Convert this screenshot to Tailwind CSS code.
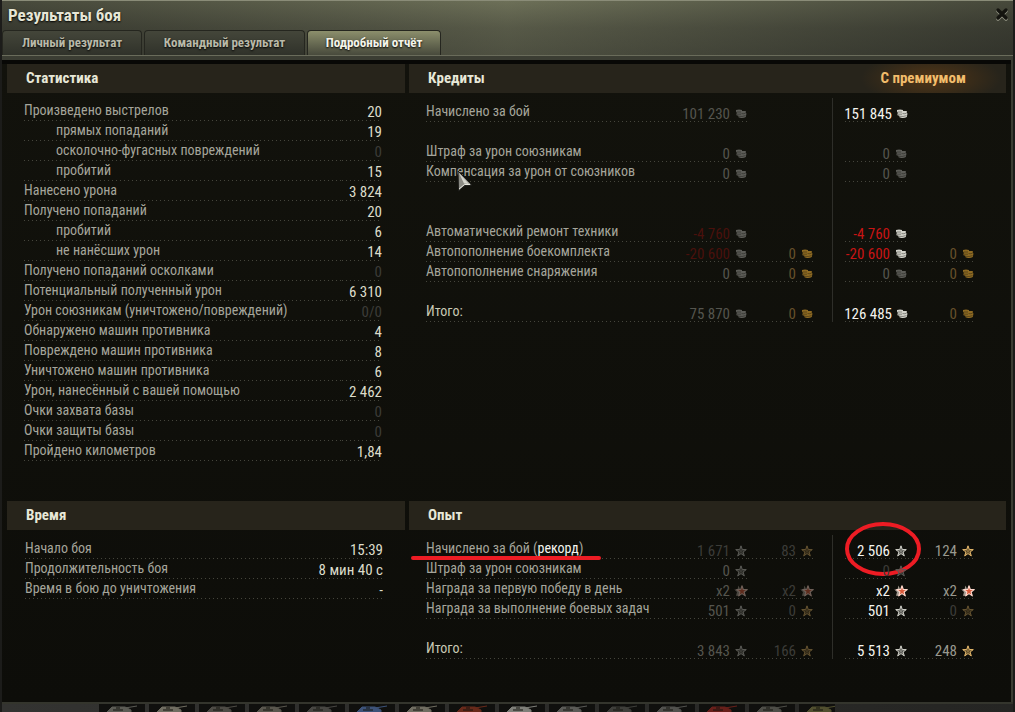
<!DOCTYPE html>
<html lang="ru">
<head>
    <meta charset="UTF-8">
    <meta name="viewport" content="width=device-width, initial-scale=1.0">
    <title>Результаты боя</title>
    <script src="https://cdn.jsdelivr.net/npm/@tailwindcss/browser@4"></script>
</head>
<body class="bg-[#1c1c1a] font-['Roboto_Condensed','Liberation_Sans_Narrow','Liberation_Sans',sans-serif]">
    <!-- Shared icons -->
    <svg class="hidden" xmlns="http://www.w3.org/2000/svg">
        <symbol id="coins" viewBox="0 0 12 10">
            <path fill="currentColor" d="M1 1L4 .5 7 1V2L10.800 2V4L11.500 4.500 10.800 8Q8.500 9.400 5 8.800L3.500 8.200V6.800L1.500 6.200V4.600L2.200 4 1 3Z"/>
            <path d="M1.500 3H6M2 5.200H6M4 7.300Q7 8 10.600 6.600M6.500 4.600Q9 5 10.600 4.200" stroke="#11110c" stroke-opacity=".5" stroke-width=".8" fill="none"/>
        </symbol>
        <symbol id="star" viewBox="0 0 12 12">
            <path fill="currentColor" fill-opacity=".35" stroke="currentColor" stroke-width="1" stroke-linejoin="round" d="M6 .8L7.300 4.500 11.300 4.600 8.100 7 9.300 10.900 6 8.600 2.700 10.900 3.900 7 .7 4.600 4.700 4.500Z"/>
            <path stroke="currentColor" stroke-width=".5" stroke-opacity=".6" d="M6 6V1M6 6L11 4.600M6 6L9.200 10.700M6 6L2.800 10.700M6 6L1 4.600"/>
        </symbol>
        <symbol id="bonus" viewBox="0 0 14 12">
            <path fill="#a39a90" d="M4.500 .5L6 4 6 11 2 10.800 3 7 .3 4.500 3.500 4.200Z"/>
            <path fill="#d95a3a" stroke="#ffd9cc" stroke-width="1.100" stroke-linejoin="round" d="M8 .8L9.300 4.500 13.300 4.600 10.100 7 11.300 10.900 8 8.600 4.700 10.900 5.900 7 2.700 4.600 6.700 4.500Z"/>
        </symbol>
    </svg>

    <main class="flex min-h-screen flex-col px-[2px]">
        <div class="flex flex-1 flex-col border-b-2 border-[#34352d] bg-[#3b3d33]">
            <header class="border-t border-[#8a8c78] bg-linear-to-b from-[#656853] via-[#4a4c3f] to-[#3f4137]">
                <div class="bg-linear-to-r from-[#22231d]/45 via-[#8b8e6a]/20 to-[#22231d]/45">
                    <div class="flex h-[29px] items-center justify-between pl-[6px] pr-1">
                        <h1 class="text-[17px] font-bold text-[#e6e6d6] [text-shadow:0_1px_2px_#000]">Результаты боя</h1>
                        <button aria-label="Закрыть" class="pb-1">
                            <svg class="h-[14px] w-[14px]" viewBox="0 0 14 14"><path d="M3 4L11 12M11 4L3 12" stroke="#9b9c8c" stroke-width="3.500" stroke-linecap="round"/><path d="M3 3L11 11M11 3L3 11" stroke="#14140f" stroke-width="3.500" stroke-linecap="round"/></svg>
                        </button>
                    </div>
                    <nav class="flex h-[25px] gap-[2px] text-[13px] font-bold">
                        <button class="w-[140px] rounded-t-sm border border-b-0 border-[#25261f] bg-linear-to-b from-[#44463a] to-[#30322a] text-[#b9b9a8] [text-shadow:0_1px_2px_#000]">Личный результат</button>
                        <button class="w-[161px] rounded-t-sm border border-b-0 border-[#25261f] bg-linear-to-b from-[#44463a] to-[#30322a] text-[#b9b9a8] [text-shadow:0_1px_2px_#000]">Командный результат</button>
                        <button class="w-[134px] rounded-t-sm border border-b-0 border-[#25261f] bg-linear-to-b from-[#8c8f6c] to-[#484a3c] text-[#f4f4ea] [text-shadow:0_1px_2px_#000]">Подробный отчёт</button>
                    </nav>
                </div>
            </header>
            <div class="h-[5px] border-t border-[#6a6c5b] bg-[#3b3d33]"></div>

            <div class="mr-[2px] grid flex-1 grid-cols-[2fr_3fr] grid-rows-[auto_1fr] gap-x-1 border-t-4 border-[#080806] bg-linear-to-b from-[#12120c] to-[#0d0d09] px-[5px]">
                <section class="min-h-[437px]">
                    <h2 class="bg-[#27241b] px-[19px] text-[15px] leading-[29px] font-bold text-[#e8e8d8]">Статистика</h2>
                    <div class="mt-1 mr-[23px] ml-[17px]"><table id="stats" class="w-full border-collapse text-[15px]"></table></div>
                </section>
                <section>
                    <h2 class="flex justify-between bg-[#27241b] bg-[radial-gradient(70px_26px_at_calc(100%-75px)_50%,#503516,transparent)] pr-10 pl-[19px] text-[15px] leading-[29px] font-bold text-[#e8e8d8]">Кредиты <span class="text-[#f2bd6c]">С премиумом</span></h2>
                    <div class="mt-[5px] mr-[31px] ml-[17px]"><table id="credits" class="w-full table-fixed border-collapse text-[15px]"></table></div>
                </section>
                <section>
                    <h2 class="bg-[#27241b] px-[19px] text-[15px] leading-[29px] font-bold text-[#e8e8d8]">Время</h2>
                    <div class="mt-[5px] mr-[22px] ml-[18px]"><table id="time" class="w-full border-collapse text-[15px]"></table></div>
                </section>
                <section>
                    <h2 class="bg-[#27241b] px-[19px] text-[15px] leading-[29px] font-bold text-[#e8e8d8]">Опыт</h2>
                    <div class="mt-[5px] mr-[31px] ml-[17px]"><table id="xp" class="w-full table-fixed border-collapse text-[15px]"></table></div>
                </section>
            </div>
        </div>
        <!-- Hangar carousel under the window -->
        <div class="h-2 bg-linear-to-r from-[#333331] to-[#252523]">
            <div class="ml-[97px] flex h-2 w-[736px] gap-1 overflow-hidden" id="carousel"></div>
        </div>
    </main>

    <!-- Mouse pointer -->
    <svg class="absolute top-[170px] left-[457px] h-[22px] w-4" viewBox="0 0 16 22"><path d="M1 1L15 15 8 15.500 1.500 21Z" fill="#8b8b84" stroke="#1b1b18"/><path d="M2 3L12 14 7 13.500Z" fill="#d6d6cd"/><path d="M2 19L7.500 14.500 13 14.500" stroke="#e6e6dd" fill="none"/></svg>

    <script>
        const line = 'bg-[repeating-linear-gradient(90deg,#45453c_0_1px,transparent_1px_4px)] bg-[length:100%_1px] bg-bottom bg-no-repeat';

        const tones = {
            off: 'text-[#3c3c38]',
            dim: 'text-[#55554e]',
            mid: 'text-[#99998f]',
            on: 'text-[#f4f4ee]',
            red: 'text-[#c81414]',
            darkred: 'text-[#4a100c]',
            gold: 'text-[#67502a]'
        };

        const iconTones = {
            dim: 'text-[#5c5c57]',
            on: 'text-[#d2d2ca]',
            gold: 'text-[#8e6a22]',
            brown: 'text-[#665431]',
            bright: 'text-[#e6b96c]'
        };

        const stats = [
            ['Произведено выстрелов', '20'],
            ['прямых попаданий', '19', true],
            ['осколочно-фугасных повреждений', '0', true],
            ['пробитий', '15', true],
            ['Нанесено урона', '3 824'],
            ['Получено попаданий', '20'],
            ['пробитий', '6', true],
            ['не нанёсших урон', '14', true],
            ['Получено попаданий осколками', '0'],
            ['Потенциальный полученный урон', '6 310'],
            ['Урон союзникам (уничтожено/повреждений)', '0/0'],
            ['Обнаружено машин противника', '4'],
            ['Повреждено машин противника', '8'],
            ['Уничтожено машин противника', '6'],
            ['Урон, нанесённый с вашей помощью', '2 462'],
            ['Очки захвата базы', '0'],
            ['Очки защиты базы', '0'],
            ['Пройдено километров', '1,84']
        ];

        const time = [
            ['Начало боя', '15:39'],
            ['Продолжительность боя', '8 мин 40 с'],
            ['Время в бою до уничтожения', '-']
        ];

        // value, text tone, icon tone; a number is an empty row of that many lines
        const credits = [
            ['Начислено за бой', ['101 230', 'dim', 'dim'], null, ['151 845', 'on', 'on'], null],
            1,
            ['Штраф за урон союзникам', ['0', 'dim', 'dim'], null, ['0', 'dim', 'dim'], null],
            ['Компенсация за урон от союзников', ['0', 'dim', 'dim'], null, ['0', 'dim', 'dim'], null],
            2,
            ['Автоматический ремонт техники', ['-4 760', 'darkred', 'dim'], null, ['-4 760', 'red', 'on'], null],
            ['Автопополнение боекомплекта', ['-20 600', 'darkred', 'dim'], ['0', 'gold', 'gold'], ['-20 600', 'red', 'on'], ['0', 'gold', 'gold']],
            ['Автопополнение снаряжения', ['0', 'dim', 'dim'], ['0', 'gold', 'gold'], ['0', 'dim', 'dim'], ['0', 'gold', 'gold']],
            1,
            ['Итого:', ['75 870', 'dim', 'dim'], ['0', 'gold', 'gold'], ['126 485', 'on', 'on'], ['0', 'gold', 'gold']]
        ];

        const xp = [
            ['Начислено за бой (<span class="text-[#f4f4ee]">рекорд</span>)', ['1 671', 'off', 'dim'], ['83', 'off', 'brown'], ['2 506', 'on', 'on', 'star', true], ['124', 'mid', 'bright']],
            ['Штраф за урон союзникам', ['0', 'dim', 'dim'], null, ['0', 'off', 'dim'], null],
            ['Награда за первую победу в день', ['x2', 'dim', 'dim', 'bonus'], ['x2', 'off', 'dim', 'bonus'], ['x2', 'on', 'on', 'bonus'], ['x2', 'mid', 'on', 'bonus']],
            ['Награда за выполнение боевых задач', ['501', 'dim', 'dim'], ['0', 'off', 'brown'], ['501', 'on', 'on'], ['0', 'off', 'brown']],
            1,
            ['Итого:', ['3 843', 'dim', 'dim'], ['166', 'off', 'brown'], ['5 513', 'on', 'on'], ['248', 'mid', 'bright']]
        ];

        function renderList(id, rows) {
            document.getElementById(id).innerHTML = rows.map(([label, value, nested], i) => `
                <tr class="${i ? 'h-5' : 'h-6'}">
                    <th scope="row" class="p-0 pb-[2px] text-left align-bottom text-sm leading-[18px] font-normal whitespace-nowrap text-[#a5a59b] ${line} ${nested ? 'pl-8' : ''}">${label}</th>
                    <td class="p-0 text-right align-bottom leading-[18px] whitespace-nowrap ${line} ${value === '0' || value === '0/0' ? tones.off : 'text-[#dcdcca]'}">${value}</td>
                </tr>`).join('');
        }

        function cell(data, icon) {
            if (!data) return '<td></td>';
            const [value, tone, iconTone, ownIcon, marked] = data;
            const name = ownIcon || icon;
            const faded = name === 'bonus' && iconTone === 'dim' ? 'opacity-40' : '';
            const size = name === 'coins' ? 'h-[10px] w-3' : name === 'star' ? 'h-3 w-3' : 'h-3 w-[14px]';
            const ring = marked ? '<svg class="absolute top-[-22px] left-0 h-[56px] w-[76px] max-w-none" viewBox="0 0 76 56"><ellipse cx="38" cy="28" rx="36" ry="25" fill="none" stroke="#ed1c24" stroke-width="4"/></svg>' : '';
            return `
                <td class="p-0 align-bottom ${line}">
                    <div class="relative flex items-center justify-end leading-4 whitespace-nowrap ${tones[tone]}">
                        ${value}
                        <span class="ml-1 flex w-[14px] justify-center"><svg class="${size} ${iconTones[iconTone]} ${faded}"><use href="#${name}"/></svg></span>
                        ${ring}
                    </div>
                </td>`;
        }

        function renderMoney(id, rows, icon) {
            let html = '<colgroup><col><col class="w-[70px]"><col class="w-[66px]"><col class="w-[31px]"><col class="w-[63px]"><col class="w-[67px]"></colgroup>';
            rows.forEach((row, i) => {
                if (row === 1) {
                    html += '<tr class="h-5"></tr>';
                    return;
                }
                if (row === 2) {
                    html += '<tr class="h-10"></tr>';
                    return;
                }
                const [label, ...cells] = row;
                const total = label === 'Итого:' ? 'text-[#c9c9b4]' : 'text-[#a5a59b]';
                const mark = label.includes('рекорд') ? '<span class="absolute top-[17px] -left-[15px] h-1 w-[190px] rounded-full bg-[#ed1c24]"></span>' : '';
                // The divider spans the whole table
                const divider = i === 0 ? `<td rowspan="${rows.length}" class="bg-[linear-gradient(#2e2e29,#2e2e29)] bg-[length:1px_100%] bg-[position:18px_0] bg-no-repeat"></td>` : '';
                html += `
                    <tr class="${i ? 'h-5' : 'h-6'}">
                        <th scope="row" class="p-0 pb-[2px] text-left align-bottom text-sm leading-[18px] font-normal whitespace-nowrap ${total} ${line}"><div class="relative">${label}${mark}</div></th>
                        ${cell(cells[0], icon)}${cell(cells[1], icon)}${divider}${cell(cells[2], icon)}${cell(cells[3], icon)}
                    </tr>`;
            });
            document.getElementById(id).innerHTML = html;
        }

        renderList('stats', stats);
        renderList('time', time);
        renderMoney('credits', credits, 'coins');
        renderMoney('xp', xp, 'star');

        const paints = ['#8d8d84', '#b0ab98', '#77736a', '#8a8678', '#6d6b66', '#5b7fc0', '#b0ab98', '#a33a22', '#c9c9c0', '#8c8c86', '#5e5e58', '#7d7d78', '#a32a22', '#77776e', '#7d7a45'];
        document.getElementById('carousel').innerHTML = paints.map(color => `
            <svg class="h-2 w-[46px] shrink-0 bg-[#10100e]" viewBox="0 0 46 8"><path d="M8 8L13 3H26L32 6V8ZM26 4L38 2" fill="${color}" stroke="${color}" opacity=".6"/><path d="M14 6H24M17 4H21" stroke="#14140f"/></svg>`).join('');
    </script>
</body>
</html>
